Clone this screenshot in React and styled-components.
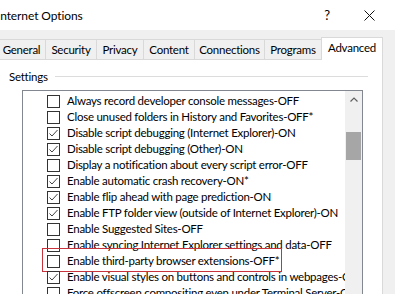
import React from 'react';
import styled, { createGlobalStyle } from 'styled-components';

const GlobalStyle = createGlobalStyle`
  html, body {
    margin: 0;
    padding: 0;
    background: #f0f0f0;
  }
  body {
    font-family: Lato, "Noto Sans", sans-serif;
    font-size: 11.5px;
    letter-spacing: -0.25px;
    color: #000;
  }
`;

const tabs = [
  { label: 'General', width: 48 },
  { label: 'Security', width: 51 },
  { label: 'Privacy', width: 47 },
  { label: 'Content', width: 51 },
  { label: 'Connections', width: 70 },
  { label: 'Programs', width: 57 },
  { label: 'Advanced', width: 62, active: true },
];

const settings = [
  { label: 'Always record developer console messages-OFF', checked: false },
  { label: 'Close unused folders in History and Favorites-OFF*', checked: false },
  { label: 'Disable script debugging (Internet Explorer)-ON', checked: true },
  { label: 'Disable script debugging (Other)-ON', checked: true },
  { label: 'Display a notification about every script error-OFF', checked: false },
  { label: 'Enable automatic crash recovery-ON*', checked: true },
  { label: 'Enable flip ahead with page prediction-ON', checked: true },
  { label: 'Enable FTP folder view (outside of Internet Explorer)-ON', checked: true },
  { label: 'Enable Suggested Sites-OFF', checked: false },
  { label: 'Enable syncing Internet Explorer settings and data-OFF', checked: false },
  { label: 'Enable third-party browser extensions-OFF*', checked: false, marked: true },
  { label: 'Enable visual styles on buttons and controls in webpages-ON', checked: true },
  { label: 'Force offscreen compositing even under Terminal Server-OFF', checked: false },
];

const Window = styled.div`
  width: 395px;
  height: 294px;
  overflow: hidden;
  display: flex;
  flex-direction: column;
  background: #f0f0f0;
`;

const TitleBar = styled.div`
  height: 30px;
  flex: none;
  background: #fff;
  display: flex;
  align-items: center;
`;

const Title = styled.div`
  flex: 1;
  margin-left: -3px;
  font-size: 12px;
  letter-spacing: -0.1px;
  white-space: nowrap;
`;

const HelpButton = styled.div`
  width: 20px;
  margin-right: 20px;
  text-align: center;
  font-size: 13px;
`;

const CloseButton = styled.div`
  width: 24px;
  margin-right: 14px;
  display: flex;
  justify-content: center;
`;

const TabStrip = styled.div`
  height: 30px;
  flex: none;
  display: flex;
  align-items: flex-end;
  margin-left: -3px;
`;

const Tab = styled.div`
  width: ${(p) => p.$width}px;
  height: ${(p) => (p.$active ? 23 : 21)}px;
  box-sizing: border-box;
  border: 1px solid #d9d9d9;
  border-bottom: ${(p) => (p.$active ? 'none' : '1px solid #d9d9d9')};
  border-right: ${(p) => (p.$active ? '1px solid #d9d9d9' : 'none')};
  background: ${(p) => (p.$active ? '#fff' : '#f0f0f0')};
  display: flex;
  justify-content: center;
  padding-top: 3px;
  white-space: nowrap;
`;

const Panel = styled.div`
  flex: 1;
  width: 382px;
  background: #fff;
  border-right: 1px solid #d9d9d9;
  display: flex;
  flex-direction: column;
  padding-top: 8px;
`;

const GroupHeader = styled.div`
  display: flex;
  align-items: center;
  padding-left: 9px;
  width: 359px;
  height: 16px;
`;

const GroupLine = styled.div`
  flex: 1;
  height: 1px;
  background: #dcdcdc;
  margin-left: 7px;
`;

const ListBox = styled.div`
  margin-left: 22px;
  margin-top: 6px;
  width: 341px;
  flex: 1;
  box-sizing: border-box;
  border: 1px solid #828790;
  border-bottom: none;
  background: #fff;
  display: flex;
`;

const Items = styled.div`
  flex: 1;
  min-width: 0;
  padding-top: 2px;
  overflow: hidden;
`;

const Row = styled.div`
  height: 16px;
  display: flex;
  align-items: center;
  padding-left: 24px;
  white-space: nowrap;
  position: relative;
`;

const Box = styled.span`
  width: 13px;
  height: 13px;
  flex: none;
  box-sizing: border-box;
  border: 1px solid #333;
  margin-right: 7px;
  display: flex;
  align-items: center;
  justify-content: center;
`;

const Label = styled.span`
  line-height: 16px;
`;

const Highlight = styled.span`
  position: absolute;
  left: 19px;
  top: -5px;
  width: 240px;
  height: 24px;
  box-sizing: border-box;
  border: 1px solid #c8323a;
`;

const ScrollBar = styled.div`
  width: 17px;
  flex: none;
  background: #f0f0f0;
  display: flex;
  flex-direction: column;
  align-items: center;
`;

const ArrowButton = styled.div`
  height: 17px;
  width: 17px;
  display: flex;
  align-items: center;
  justify-content: center;
`;

const Thumb = styled.div`
  width: 15px;
  height: 28px;
  margin-top: 24px;
  background: #a6a6a6;
`;

function Check() {
  return (
    <svg width="11" height="11" viewBox="0 0 11 11">
      <path d="M1.5 5.5 L4 8 L9.5 2" fill="none" stroke="#444" strokeWidth="1" />
    </svg>
  );
}

export default function App() {
  return (
    <Window>
      <GlobalStyle />
      <TitleBar>
        <Title>Internet Options</Title>
        <HelpButton>?</HelpButton>
        <CloseButton>
          <svg width="11" height="11" viewBox="0 0 11 11">
            <path d="M0.5 0.5 L10.5 10.5 M10.5 0.5 L0.5 10.5" stroke="#111" strokeWidth="1" />
          </svg>
        </CloseButton>
      </TitleBar>
      <TabStrip>
        {tabs.map((t) => (
          <Tab key={t.label} $width={t.width} $active={t.active}>
            {t.label}
          </Tab>
        ))}
      </TabStrip>
      <Panel>
        <GroupHeader>
          Settings
          <GroupLine />
        </GroupHeader>
        <ListBox>
          <Items>
            {settings.map((s) => (
              <Row key={s.label}>
                <Box>{s.checked && <Check />}</Box>
                <Label>{s.label}</Label>
                {s.marked && <Highlight />}
              </Row>
            ))}
          </Items>
          <ScrollBar>
            <ArrowButton>
              <svg width="8" height="5" viewBox="0 0 8 5">
                <path d="M0.5 4.5 L4 1 L7.5 4.5" fill="none" stroke="#606060" strokeWidth="1.2" />
              </svg>
            </ArrowButton>
            <Thumb />
          </ScrollBar>
        </ListBox>
      </Panel>
    </Window>
  );
}
